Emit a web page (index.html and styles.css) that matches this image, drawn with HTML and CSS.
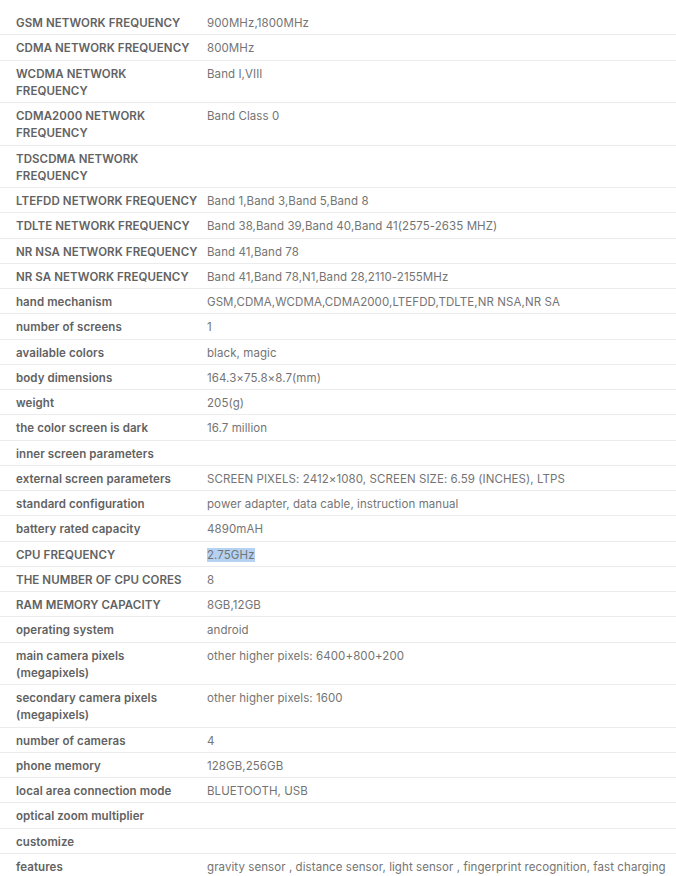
FILE: index.html
```html
<!DOCTYPE html>
<html>
<head>
<meta charset="utf-8">
<link rel="stylesheet" href="styles.css">
</head>
<body>
<table class="specs">
<tbody>
<tr><th>GSM NETWORK FREQUENCY</th><td>900MHz,1800MHz</td></tr>
<tr><th>CDMA NETWORK FREQUENCY</th><td>800MHz</td></tr>
<tr><th>WCDMA NETWORK FREQUENCY</th><td>Band I,VIII</td></tr>
<tr><th>CDMA2000 NETWORK FREQUENCY</th><td>Band Class 0</td></tr>
<tr><th>TDSCDMA NETWORK FREQUENCY</th><td></td></tr>
<tr><th>LTEFDD NETWORK FREQUENCY</th><td>Band 1,Band 3,Band 5,Band 8</td></tr>
<tr><th>TDLTE NETWORK FREQUENCY</th><td>Band 38,Band 39,Band 40,Band 41(2575-2635 MHZ)</td></tr>
<tr><th>NR NSA NETWORK FREQUENCY</th><td>Band 41,Band 78</td></tr>
<tr><th>NR SA NETWORK FREQUENCY</th><td>Band 41,Band 78,N1,Band 28,2110-2155MHz</td></tr>
<tr><th>hand mechanism</th><td>GSM,CDMA,WCDMA,CDMA2000,LTEFDD,TDLTE,NR NSA,NR SA</td></tr>
<tr><th>number of screens</th><td>1</td></tr>
<tr><th>available colors</th><td>black, magic</td></tr>
<tr><th>body dimensions</th><td>164.3×75.8×8.7(mm)</td></tr>
<tr><th>weight</th><td>205(g)</td></tr>
<tr><th>the color screen is dark</th><td>16.7 million</td></tr>
<tr><th>inner screen parameters</th><td></td></tr>
<tr><th>external screen parameters</th><td>SCREEN PIXELS: 2412×1080, SCREEN SIZE: 6.59 (INCHES), LTPS</td></tr>
<tr><th>standard configuration</th><td>power adapter, data cable, instruction manual</td></tr>
<tr><th>battery rated capacity</th><td>4890mAH</td></tr>
<tr><th>CPU FREQUENCY</th><td><span class="sel">2.75GHz</span></td></tr>
<tr><th>THE NUMBER OF CPU CORES</th><td>8</td></tr>
<tr><th>RAM MEMORY CAPACITY</th><td>8GB,12GB</td></tr>
<tr><th>operating system</th><td>android</td></tr>
<tr><th>main camera pixels (megapixels)</th><td>other higher pixels: 6400+800+200</td></tr>
<tr><th>secondary camera pixels (megapixels)</th><td>other higher pixels: 1600</td></tr>
<tr><th>number of cameras</th><td>4</td></tr>
<tr><th>phone memory</th><td>128GB,256GB</td></tr>
<tr><th>local area connection mode</th><td>BLUETOOTH, USB</td></tr>
<tr><th>optical zoom multiplier</th><td></td></tr>
<tr><th>customize</th><td></td></tr>
<tr><th>features</th><td>gravity sensor , distance sensor, light sensor , fingerprint recognition, fast charging</td></tr>
</tbody>
</table>
</body>
</html>
```
FILE: styles.css
```css
html, body {
  margin: 0;
  padding: 0;
  background: #ffffff;
}
body {
  padding-top: 10px;
  font-family: Inter, "Liberation Sans", Arial, sans-serif;
  font-size: 11.5px;
  line-height: 17.25px;
  letter-spacing: 0.08px;
}
.specs {
  width: 100%;
  table-layout: fixed;
  border-collapse: collapse;
  border-spacing: 0;
}
.specs tr {
  border-bottom: 1px solid #ececec;
}
.specs tr:last-child {
  border-bottom: none;
}
.specs th,
.specs td {
  padding: 5px 0 2px 0;
  vertical-align: top;
  text-align: left;
}
.specs th {
  width: 182px;
  padding-left: 16px;
  padding-right: 9px;
  font-weight: 600;
  color: #626262;
}
.specs td {
  color: #747474;
  white-space: nowrap;
}
.sel {
  background: #b5d2f3;
}
```
